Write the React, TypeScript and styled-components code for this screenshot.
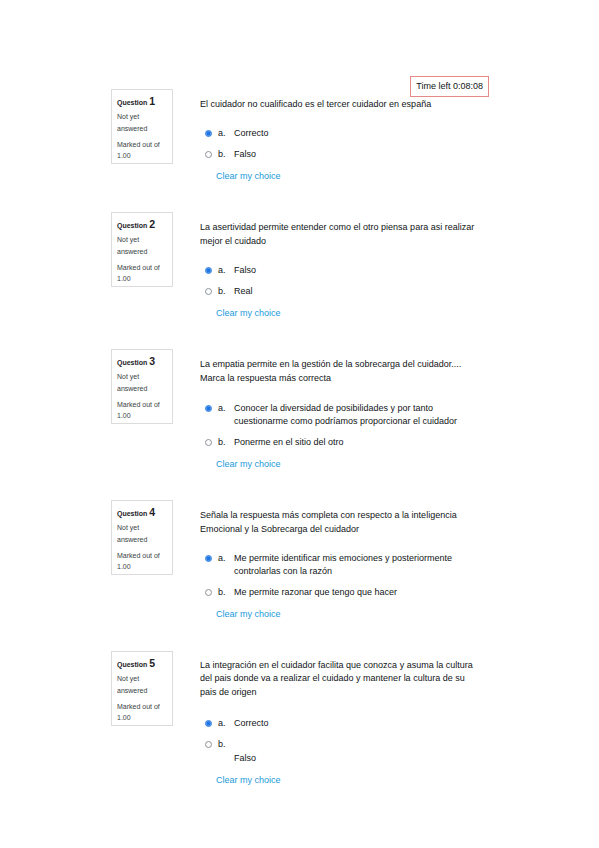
import React from 'react';
import styled, { createGlobalStyle } from 'styled-components';

const GlobalStyle = createGlobalStyle`
  html, body { margin: 0; padding: 0; background: #ffffff; }
  body { font-family: "Liberation Sans", Arial, Helvetica, sans-serif; color: #1d2125; }
`;

const Page = styled.div`
  width: 599px;
  min-height: 848px;
  box-sizing: border-box;
  padding-top: 76px;
`;

const TimerRow = styled.div`
  display: flex;
  justify-content: flex-end;
  height: 13px;
  padding-right: 110px;
`;

const Timer = styled.div`
  box-sizing: border-box;
  height: 21px;
  padding: 0 5px;
  border: 1px solid #e58a87;
  font-size: 9px;
  line-height: 19px;
  color: #111417;
  white-space: nowrap;
  flex-shrink: 0;
`;

const QuestionList = styled.div`
  display: flex;
  flex-direction: column;
  gap: 29.5px;
`;

const QuestionRow = styled.div`
  display: flex;
  align-items: flex-start;
  padding-left: 111px;
`;

const InfoBox = styled.div`
  box-sizing: border-box;
  width: 62px;
  height: 75px;
  border: 1px solid #dcdcdc;
  padding: 4px 4px 0 5px;
  margin-right: 27px;
  flex-shrink: 0;
`;

const QLabel = styled.div`
  font-size: 7px;
  font-weight: bold;
  line-height: 14px;
  color: #1d2125;
  white-space: nowrap;
`;

const QNumber = styled.span`
  font-size: 10.5px;
  font-weight: bold;
  margin-left: 2px;
`;

const InfoText = styled.div<{ $gap?: number }>`
  font-size: 7px;
  line-height: ${(p) => (p.$gap ? 11 : 12)}px;
  color: #3a3f44;
  margin-top: ${(p) => p.$gap ?? 1}px;
`;

const Content = styled.div`
  padding-top: 8px;
  width: 290px;
`;

const QText = styled.div<{ $lh?: number }>`
  font-size: 9px;
  line-height: ${(p) => p.$lh ?? 14}px;
  color: #111417;
  white-space: nowrap;
`;

const Options = styled.div<{ $mt?: number }>`
  margin-top: ${(p) => p.$mt ?? 11.5}px;
  display: flex;
  flex-direction: column;
`;

const OptionRow = styled.div<{ $lh?: number }>`
  display: flex;
  align-items: flex-start;
  padding: 4px 0;
  font-size: 9px;
  line-height: ${(p) => p.$lh ?? 13}px;
  color: #111417;
  white-space: nowrap;
`;

const Radio = styled.span<{ $checked: boolean }>`
  box-sizing: border-box;
  width: 7px;
  height: 7px;
  border-radius: 50%;
  margin: 3px 6px 0 5px;
  flex-shrink: 0;
  border: 1px solid ${(p) => (p.$checked ? '#4a8fe8' : '#8d9399')};
  background: ${(p) => (p.$checked ? '#1f74e0' : '#ffffff')};
  box-shadow: ${(p) => (p.$checked ? 'inset 0 0 0 0.6px #6aa6f0' : 'none')};
`;

const Letter = styled.span`
  width: 16px;
  flex-shrink: 0;
`;

const OptionText = styled.span``;

const ClearLink = styled.a`
  display: block;
  margin-top: 5px;
  padding-left: 16px;
  font-size: 9px;
  line-height: 13px;
  color: #1a9ad9;
  text-decoration: none;
  cursor: pointer;
`;

type Opt = { letter: string; lines: string[]; checked: boolean; lh?: number };
type Q = { n: number; text: string[]; textLh?: number; optMt?: number; options: Opt[] };

const questions: Q[] = [
  {
    n: 1,
    text: ['El cuidador no cualificado es el tercer cuidador en españa'],
    options: [
      { letter: 'a.', lines: ['Correcto'], checked: true },
      { letter: 'b.', lines: ['Falso'], checked: false },
    ],
  },
  {
    n: 2,
    text: ['La asertividad permite entender como el otro piensa para asi realizar', 'mejor el cuidado'],
    options: [
      { letter: 'a.', lines: ['Falso'], checked: true },
      { letter: 'b.', lines: ['Real'], checked: false },
    ],
  },
  {
    n: 3,
    text: ['La empatia permite en la gestión de la sobrecarga del cuidador....', 'Marca la respuesta más correcta'],
    optMt: 12.5,
    options: [
      {
        letter: 'a.',
        lines: ['Conocer la diversidad de posibilidades y por tanto', 'cuestionarme como podríamos proporcionar el cuidador'],
        checked: true,
      },
      { letter: 'b.', lines: ['Ponerme en el sitio del otro'], checked: false },
    ],
  },
  {
    n: 4,
    text: ['Señala la respuesta más completa con respecto a la inteligencia', 'Emocional y la Sobrecarga del cuidador'],
    optMt: 12,
    options: [
      {
        letter: 'a.',
        lines: ['Me permite identificar mis emociones y posteriormente', 'controlarlas con la razón'],
        checked: true,
      },
      { letter: 'b.', lines: ['Me permite razonar que tengo que hacer'], checked: false },
    ],
  },
  {
    n: 5,
    text: [
      'La integración en el cuidador facilita que conozca y asuma la cultura',
      'del pais donde va a realizar el cuidado y mantener la cultura de su',
      'pais de origen',
    ],
    textLh: 13.5,
    optMt: 14,
    options: [
      { letter: 'a.', lines: ['Correcto'], checked: true },
      { letter: 'b.', lines: ['\u00a0', 'Falso'], checked: false, lh: 13.5 },
    ],
  },
];

const Question: React.FC<{ q: Q }> = ({ q }) => (
  <QuestionRow>
    <InfoBox>
      <QLabel>
        Question<QNumber>{q.n}</QNumber>
      </QLabel>
      <InfoText>
        Not yet
        <br />
        answered
      </InfoText>
      <InfoText $gap={4}>
        Marked out of
        <br />
        1.00
      </InfoText>
    </InfoBox>
    <Content>
      {q.text.map((t, i) => (
        <QText key={i} $lh={q.textLh}>
          {t}
        </QText>
      ))}
      <Options $mt={q.optMt}>
        {q.options.map((o) => (
          <OptionRow key={o.letter} $lh={o.lh}>
            <Radio $checked={o.checked} />
            <Letter>{o.letter}</Letter>
            <OptionText>
              {o.lines.map((l, i) => (
                <React.Fragment key={i}>
                  {i > 0 && <br />}
                  {l}
                </React.Fragment>
              ))}
            </OptionText>
          </OptionRow>
        ))}
      </Options>
      <ClearLink>Clear my choice</ClearLink>
    </Content>
  </QuestionRow>
);

export default function App() {
  return (
    <>
      <GlobalStyle />
      <Page>
        <TimerRow>
          <Timer>Time left 0:08:08</Timer>
        </TimerRow>
        <QuestionList>
          {questions.map((q) => (
            <Question key={q.n} q={q} />
          ))}
        </QuestionList>
      </Page>
    </>
  );
}
